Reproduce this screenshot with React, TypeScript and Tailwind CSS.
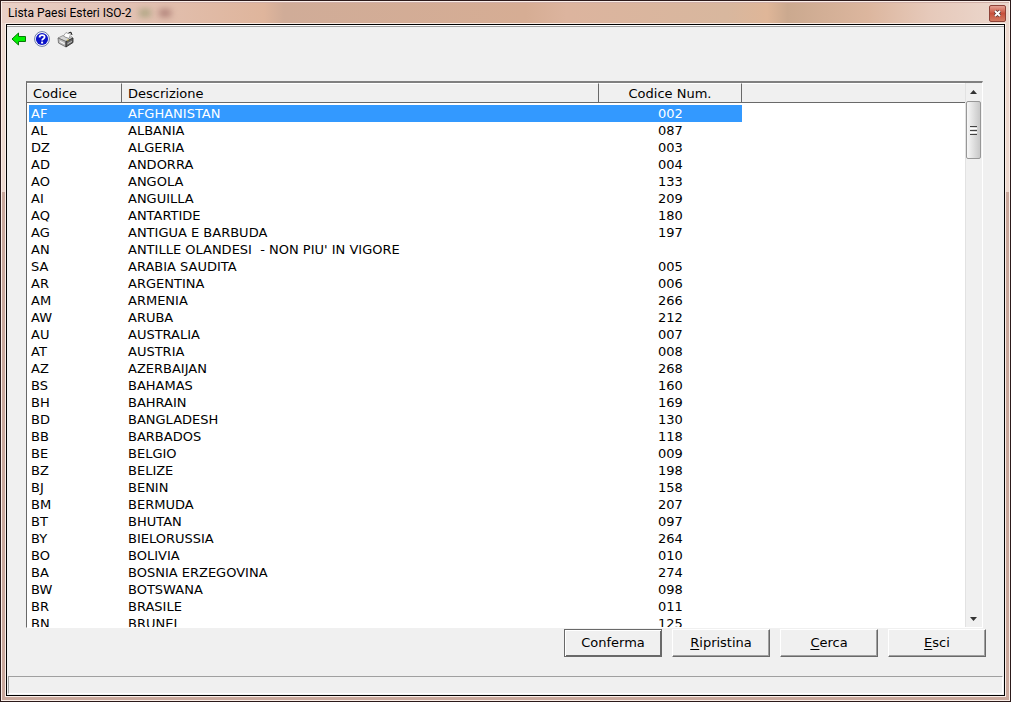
import { useState } from 'react';

interface Country {
  code: string;
  name: string;
  num: string;
}

interface ActionButton {
  hotkey: string;
  label: string;
  isDefault?: boolean;
}

const countries: Country[] = [
  { code: 'AF', name: 'AFGHANISTAN', num: '002' },
  { code: 'AL', name: 'ALBANIA', num: '087' },
  { code: 'DZ', name: 'ALGERIA', num: '003' },
  { code: 'AD', name: 'ANDORRA', num: '004' },
  { code: 'AO', name: 'ANGOLA', num: '133' },
  { code: 'AI', name: 'ANGUILLA', num: '209' },
  { code: 'AQ', name: 'ANTARTIDE', num: '180' },
  { code: 'AG', name: 'ANTIGUA E BARBUDA', num: '197' },
  { code: 'AN', name: "ANTILLE OLANDESI  - NON PIU' IN VIGORE", num: '' },
  { code: 'SA', name: 'ARABIA SAUDITA', num: '005' },
  { code: 'AR', name: 'ARGENTINA', num: '006' },
  { code: 'AM', name: 'ARMENIA', num: '266' },
  { code: 'AW', name: 'ARUBA', num: '212' },
  { code: 'AU', name: 'AUSTRALIA', num: '007' },
  { code: 'AT', name: 'AUSTRIA', num: '008' },
  { code: 'AZ', name: 'AZERBAIJAN', num: '268' },
  { code: 'BS', name: 'BAHAMAS', num: '160' },
  { code: 'BH', name: 'BAHRAIN', num: '169' },
  { code: 'BD', name: 'BANGLADESH', num: '130' },
  { code: 'BB', name: 'BARBADOS', num: '118' },
  { code: 'BE', name: 'BELGIO', num: '009' },
  { code: 'BZ', name: 'BELIZE', num: '198' },
  { code: 'BJ', name: 'BENIN', num: '158' },
  { code: 'BM', name: 'BERMUDA', num: '207' },
  { code: 'BT', name: 'BHUTAN', num: '097' },
  { code: 'BY', name: 'BIELORUSSIA', num: '264' },
  { code: 'BO', name: 'BOLIVIA', num: '010' },
  { code: 'BA', name: 'BOSNIA ERZEGOVINA', num: '274' },
  { code: 'BW', name: 'BOTSWANA', num: '098' },
  { code: 'BR', name: 'BRASILE', num: '011' },
  { code: 'BN', name: 'BRUNEI', num: '125' },
];

const actions: ActionButton[] = [
  { hotkey: '', label: 'Conferma', isDefault: true },
  { hotkey: 'R', label: 'ipristina' },
  { hotkey: 'C', label: 'erca' },
  { hotkey: 'E', label: 'sci' },
];

function BackIcon() {
  return (
    <svg className="h-4 w-4" viewBox="0 0 16 16">
      <path d="M1 8 7.5 2V5.5H14.5V10.5H7.5V14Z" fill="#00f000" stroke="#087808" strokeWidth="1" />
    </svg>
  );
}

function HelpIcon() {
  return (
    <svg className="h-4 w-4" viewBox="0 0 16 16">
      <circle cx="8" cy="8" r="7.4" fill="#fff" stroke="#5a6a9c" strokeWidth="0.9" />
      <circle cx="8" cy="8" r="6.1" fill="#0a12c8" />
      <path d="M5.6 6.4C5.6 3.4 10.6 3.4 10.6 6.1C10.6 7.9 8.1 7.7 8.1 9.6" fill="none" stroke="#fff" strokeWidth="1.8" />
      <rect x="7.1" y="10.6" width="2" height="1.9" fill="#fff" />
    </svg>
  );
}

function PrinterIcon() {
  return (
    <svg className="h-[17px] w-[17px]" viewBox="0 0 17 17">
      <path d="M6 5.5 9 1.5 11 2.5 14 1.2 12 8Z" fill="#fff" stroke="#888" strokeWidth="0.7" />
      <path d="M11.5 2 14 1.2 15 4" fill="none" stroke="#222" strokeWidth="1" />
      <path d="M1 7 6 4.5 8 6 12 7.5 14 5.5 16 7 9 10.5Z" fill="#d6d6d6" stroke="#777" strokeWidth="0.7" />
      <path d="M1 7 9 10.5V16L1.5 12Z" fill="#bcbcbc" stroke="#666" strokeWidth="0.8" />
      <path d="M9 10.5 16 7V11.5L9 16Z" fill="#666" stroke="#222" strokeWidth="0.8" />
      <path d="M3 10.5 7.5 12.8" stroke="#f8f8f8" strokeWidth="1.2" />
      <path d="M10.5 12.8 14.8 10.4" stroke="#ddd" strokeWidth="0.8" />
      <circle cx="10.8" cy="9" r="0.7" fill="#e0d040" />
    </svg>
  );
}

function TitleBar() {
  return (
    <header className="flex h-[21px] items-center justify-between border-t border-[#cfaea6] bg-[linear-gradient(to_right,#ead0c6,#e2c2b4_12%,#dfb59c_26%,#d0ac98_28%,#d6ad94_52%,#dcb49e_56%,#d8b79e_72%,#dfb698_76%,#cba98f_78%,#dcb69e_86%,#e6c9ba_92%,#ecd8ce)] pr-[3px] pl-1.5">
      <div className="flex items-center gap-2">
        <h1 className="font-[Roboto,'Open_Sans',sans-serif] text-[12px] whitespace-nowrap text-black">
          Lista Paesi Esteri ISO-2
        </h1>
        <span className="h-2 w-3 bg-[#8f9668] opacity-60 blur-[3px]" />
        <span className="h-2 w-3 bg-[#94605c] opacity-60 blur-[3px]" />
      </div>
      <button
        type="button"
        aria-label="Chiudi"
        className="flex h-[17px] w-[17px] items-center justify-center rounded-xs border border-[#8d4238] bg-linear-to-b from-[#e3a093] via-[#c8503c] to-[#d27a62]"
      >
        <svg className="h-[9px] w-[9px]" viewBox="0 0 9 9">
          <path d="M2 2 7 7M7 2 2 7" stroke="#5c3430" strokeWidth="3.4" />
          <path d="M2 2 7 7M7 2 2 7" stroke="#fff" strokeWidth="1.9" />
        </svg>
      </button>
    </header>
  );
}

function Toolbar() {
  return (
    <div className="flex h-6 items-center gap-[7px] pl-1">
      <button type="button" aria-label="Indietro">
        <BackIcon />
      </button>
      <button type="button" aria-label="Aiuto">
        <HelpIcon />
      </button>
      <button type="button" aria-label="Stampa">
        <PrinterIcon />
      </button>
    </div>
  );
}

function ScrollBar() {
  return (
    <div className="flex w-[17px] shrink-0 flex-col border-l border-[#e2e2e2] bg-[#f0f0f0] pr-px">
      <button type="button" aria-label="Scorri su" className="flex h-[18px] shrink-0 items-center justify-center">
        <svg className="h-1 w-[7px]" viewBox="0 0 7 4">
          <path d="M0 4 3.5 0 7 4Z" fill="#333" />
        </svg>
      </button>
      <div className="flex h-[58px] shrink-0 flex-col items-center justify-center gap-px rounded-xs border border-[#979797] bg-linear-to-r from-[#f7f7f7] to-[#c8c8c8]">
        <span className="h-px w-[7px] bg-[#444]" />
        <span className="h-px w-[7px] bg-white" />
        <span className="h-px w-[7px] bg-[#444]" />
        <span className="h-px w-[7px] bg-white" />
        <span className="h-px w-[7px] bg-[#444]" />
      </div>
      <div className="flex-1" />
      <button type="button" aria-label="Scorri giù" className="flex h-[17px] shrink-0 items-center justify-center">
        <svg className="h-1 w-[7px]" viewBox="0 0 7 4">
          <path d="M0 0H7L3.5 4Z" fill="#333" />
        </svg>
      </button>
    </div>
  );
}

function CountryTable() {
  const [selected, setSelected] = useState('AF');

  const head = 'h-5 border-b border-b-[#696969] border-t border-t-white bg-[#f0f0f0] pt-px leading-[18px]';

  return (
    <div className="flex min-h-0 flex-1 border border-t-2 border-t-[#808080] border-r-white border-b-white border-l-[#696969] bg-white">
      <div className="min-w-0 flex-1 overflow-hidden">
        <table className="w-full table-fixed border-separate border-spacing-0">
          <colgroup>
            <col className="w-[95px]" />
            <col className="w-[477px]" />
            <col className="w-[143px]" />
            <col />
          </colgroup>
          <thead>
            <tr>
              <th className="p-0 pb-0.5 text-left font-normal">
                <div className={`${head} border-r border-r-[#696969] pl-1.5`}>Codice</div>
              </th>
              <th className="p-0 pb-0.5 text-left font-normal">
                <div className={`${head} border-r border-r-[#696969] pl-1.5`}>Descrizione</div>
              </th>
              <th className="p-0 pb-0.5 text-center font-normal">
                <div className={`${head} border-r border-r-[#696969]`}>Codice Num.</div>
              </th>
              <td className="p-0 pb-0.5">
                <div className={head} />
              </td>
            </tr>
          </thead>
          <tbody>
            {countries.map((country) => {
              const cell = country.code === selected ? 'bg-[#3399ff] text-white' : 'text-black';
              return (
                <tr key={country.code} onClick={() => setSelected(country.code)}>
                  <td className={`h-[17px] border-l-2 border-white p-0 pl-0.5 ${cell}`}>{country.code}</td>
                  <td className={`h-[17px] p-0 pl-1.5 whitespace-pre ${cell}`}>{country.name}</td>
                  <td className={`h-[17px] p-0 text-center ${cell}`}>{country.num}</td>
                  <td className="p-0" />
                </tr>
              );
            })}
          </tbody>
        </table>
      </div>
      <ScrollBar />
    </div>
  );
}

export default function App() {
  return (
    <div className="flex h-screen flex-col border border-[#2c1a1a] bg-[#c9a89c] font-['DejaVu_Sans',Verdana,sans-serif] text-[13px] leading-[17px] text-black">
      <div className="flex min-h-0 flex-1 flex-col border border-[#fbeee8]">
        <TitleBar />
        <div className="flex min-h-0 flex-1 bg-linear-to-b from-[#ecd8ce] from-25% to-[#c9a89c] to-25% px-[3px] pb-[3px]">
          <main className="flex min-w-0 flex-1 flex-col border border-[#fbeee8]">
            <div className="flex min-h-0 flex-1 flex-col border border-black bg-[#f0f0f0]">
              <div className="h-0.5 shrink-0 border-t border-b border-t-white border-b-[#a0a0a0]" />
              <Toolbar />
              <section className="flex min-h-0 flex-1 flex-col pt-[30px] pr-[21px] pl-[19px]">
                <CountryTable />
              </section>
              <div className="flex justify-end gap-2.5 pt-px pr-[18px]">
                {actions.map((action) => (
                  <button
                    key={action.label}
                    type="button"
                    className={`h-7 w-[98px] border pb-0.5 ${
                      action.isDefault
                        ? 'border-[#696969] shadow-[inset_1px_1px_#fff,inset_-1px_-1px_#696969]'
                        : 'border-t-white border-r-[#696969] border-b-[#696969] border-l-white shadow-[inset_-1px_-1px_#a0a0a0]'
                    }`}
                  >
                    <span className="underline underline-offset-2">{action.hotkey}</span>
                    {action.label}
                  </button>
                ))}
              </div>
              <footer className="mx-px mt-[19px] mb-px h-[18px] shrink-0 border border-t-[#a0a0a0] border-r-white border-b-white border-l-[#a0a0a0]" />
            </div>
          </main>
        </div>
      </div>
    </div>
  );
}
